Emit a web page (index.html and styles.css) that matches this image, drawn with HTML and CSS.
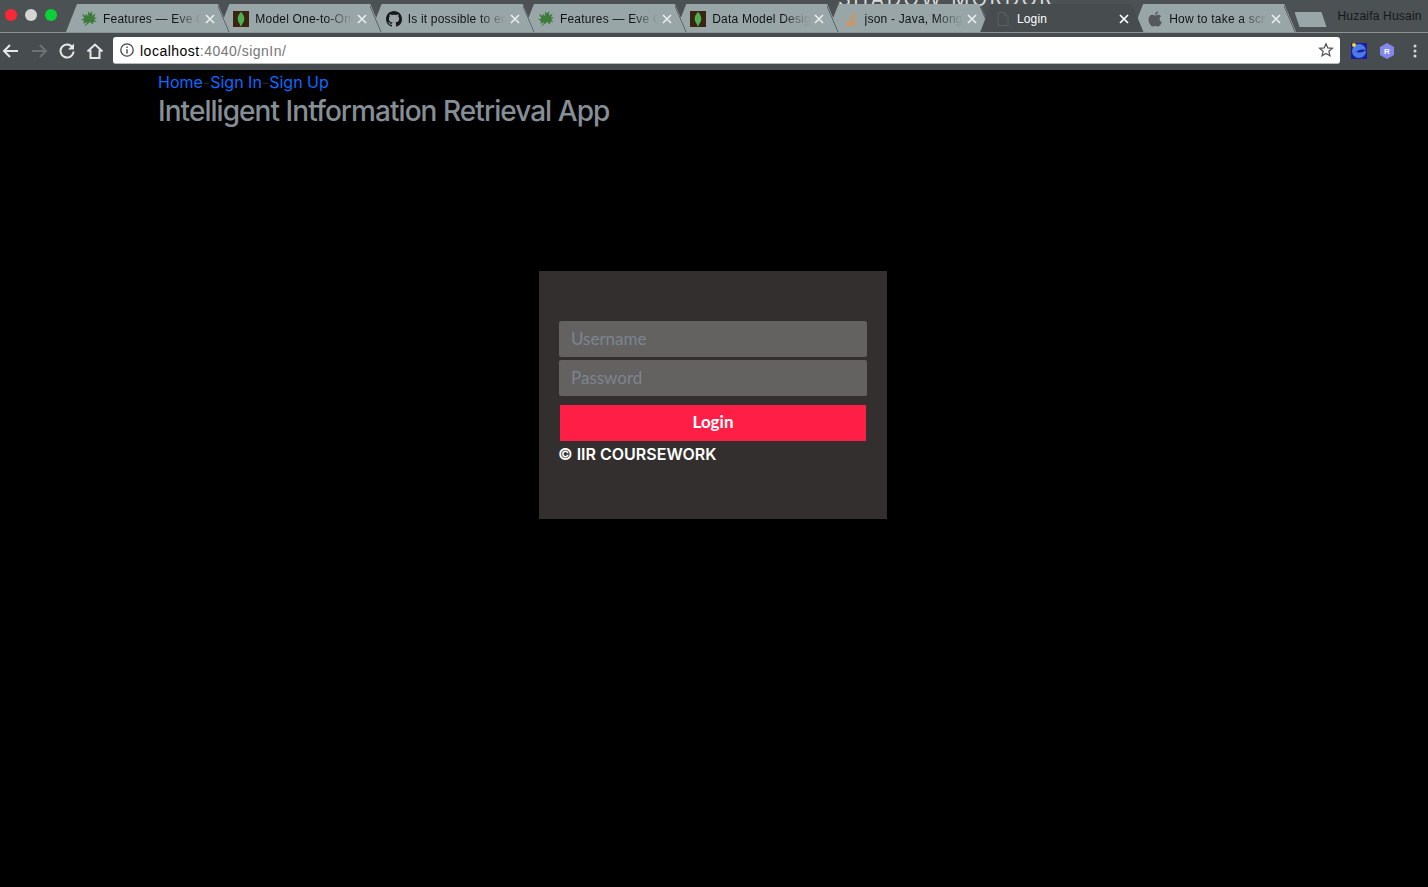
FILE: index.html
```html
<!DOCTYPE html>
<html lang="en">
<head>
    <meta charset="UTF-8">
    <title>Login</title>
    <link rel="stylesheet" href="styles.css">
</head>
<body>

<svg class="defs" width="0" height="0">
    <symbol id="leaf" viewBox="0 0 16 16">
        <path d="M3 15.500 6.600 11 2.400 12.800 3 10 0 8.400 3.400 7.400 1 3 5 4.800 5.400 2.400 7.200 5.400 7 .6 9 2.600 11.200 0 11 4.600 14.600 2.400 13 6.400 16 6.200 13.200 8.800 15.400 11 12.200 10.800 12.200 13.600 8.800 11 7.200 12.800z"/>
    </symbol>
    <symbol id="mongo" viewBox="0 0 16 16">
        <rect width="16" height="16" fill="#3a2412"/>
        <path d="M8 .8C10.800 3.800 11.600 6.600 11.200 9 10.800 11.400 9 12.800 8.400 15.200H7.600C7 12.800 5.200 11.400 4.800 9 4.400 6.600 5.200 3.800 8 .8z" fill="#4caf50"/>
    </symbol>
    <symbol id="github" viewBox="0 0 16 16">
        <path d="M8 0C3.58 0 0 3.58 0 8c0 3.54 2.29 6.53 5.47 7.59.4.07.55-.17.55-.38 0-.19-.01-.82-.01-1.49-2.01.37-2.53-.49-2.69-.94-.09-.23-.48-.94-.82-1.13-.28-.15-.68-.52-.01-.53.63-.01 1.08.58 1.23.82.72 1.21 1.87.87 2.33.66.07-.52.28-.87.51-1.07-1.78-.2-3.64-.89-3.64-3.95 0-.87.31-1.59.82-2.15-.08-.2-.36-1.02.08-2.12 0 0 .67-.21 2.2.82.64-.18 1.32-.27 2-.27.68 0 1.36.09 2 .27 1.53-1.04 2.2-.82 2.2-.82.44 1.1.16 1.92.08 2.12.51.56.82 1.27.82 2.15 0 3.07-1.87 3.75-3.65 3.95.29.25.54.73.54 1.48 0 1.07-.01 1.93-.01 2.2 0 .21.15.46.55.38A8.013 8.013 0 0016 8c0-4.42-3.58-8-8-8z"/>
    </symbol>
    <symbol id="stack" viewBox="0 0 16 16">
        <path d="M3.500 10.500v4h8v-4M5.200 12.800h4.600M5.400 10.800l4.600.6M5.800 8.800l4.400 1.400M6.600 6.800l4 2.200M8 4.800l3.200 3M9.600 3.200l2.200 3.800M11.400 1.600l1 4" fill="none" stroke="#ee8a3c" stroke-width=".9"/>
    </symbol>
    <symbol id="doc" viewBox="0 0 16 16">
        <path d="M3 1.500h6.500L13 5v9.500H3zM9.500 1.500V5H13" fill="none" stroke="#5b5f62"/>
    </symbol>
    <symbol id="apple" viewBox="0 0 16 16">
        <path d="M11 .5c.1 1.700-1.200 3.200-2.900 3.200C8 2 9.500.6 11 .5zM8.200 4.500c.8 0 1.700-.8 3-.8 1.100 0 2.300.6 3 1.600-2.400 1.400-2 4.800.6 5.800-.7 1.800-2.100 4.400-3.600 4.400-1 0-1.400-.6-2.600-.6s-1.700.6-2.600.6C4.200 15.500 1.500 12 1.500 8.500c0-3 1.900-4.800 3.900-4.800 1.200 0 2.100.8 2.800.8z"/>
    </symbol>
    <symbol id="close" viewBox="0 0 10 10">
        <path d="M1 1l8 8M9 1L1 9" fill="none" stroke="currentColor" stroke-width="1.700"/>
    </symbol>
</svg>

<header class="browser">
    <div class="tabstrip">
        <span class="backdrop-text">SHADOW MORDOR</span>
        <div class="lights">
            <span class="light light-red"></span>
            <span class="light light-grey"></span>
            <span class="light light-green"></span>
        </div>
        <div class="tabs">
            <div class="tab">
                <svg class="favicon icon-leaf"><use href="#leaf"/></svg>
                <span class="tab-title">Features — Eve Core</span>
                <svg class="tab-close"><use href="#close"/></svg>
            </div>
            <div class="tab">
                <svg class="favicon"><use href="#mongo"/></svg>
                <span class="tab-title">Model One-to-One</span>
                <svg class="tab-close"><use href="#close"/></svg>
            </div>
            <div class="tab">
                <svg class="favicon icon-github"><use href="#github"/></svg>
                <span class="tab-title">Is it possible to embed</span>
                <svg class="tab-close"><use href="#close"/></svg>
            </div>
            <div class="tab">
                <svg class="favicon icon-leaf"><use href="#leaf"/></svg>
                <span class="tab-title">Features — Eve Core</span>
                <svg class="tab-close"><use href="#close"/></svg>
            </div>
            <div class="tab">
                <svg class="favicon"><use href="#mongo"/></svg>
                <span class="tab-title">Data Model Design</span>
                <svg class="tab-close"><use href="#close"/></svg>
            </div>
            <div class="tab">
                <svg class="favicon"><use href="#stack"/></svg>
                <span class="tab-title">json - Java, MongoDB</span>
                <svg class="tab-close"><use href="#close"/></svg>
            </div>
            <div class="tab tab-active">
                <svg class="favicon"><use href="#doc"/></svg>
                <span class="tab-title">Login</span>
                <svg class="tab-close"><use href="#close"/></svg>
            </div>
            <div class="tab">
                <svg class="favicon icon-apple"><use href="#apple"/></svg>
                <span class="tab-title">How to take a screenshot</span>
                <svg class="tab-close"><use href="#close"/></svg>
            </div>
        </div>
        <span class="new-tab"></span>
        <span class="profile">Huzaifa Husain</span>
    </div>

    <div class="toolbar">
        <svg class="tool tool-first" viewBox="0 0 28 28">
            <path d="M21 14H7M13 8l-6 6 6 6" fill="none" stroke="#e6e8e8" stroke-width="2"/>
        </svg>
        <svg class="tool" viewBox="0 0 28 28">
            <path d="M7 14h14M15 8l6 6-6 6" fill="none" stroke="#6d7275" stroke-width="2"/>
        </svg>
        <svg class="tool" viewBox="0 0 28 28">
            <path d="M19.500 10.500A6.500 6.500 0 1 0 20.500 14.500" fill="none" stroke="#e6e8e8" stroke-width="2"/>
            <path d="M21 6.500v6h-6z" fill="#e6e8e8"/>
        </svg>
        <svg class="tool" viewBox="0 0 28 28">
            <path d="M6.500 14.500 14 7.500l7.500 7M9.500 13v8h9v-8" fill="none" stroke="#e6e8e8" stroke-width="2"/>
        </svg>

        <div class="omnibox">
            <svg class="omni-info" viewBox="0 0 14 14">
                <circle cx="7" cy="7" r="6.200" fill="none" stroke="#444" stroke-width="1.300"/>
                <path d="M7 6.200v4.200M7 3.500v1.400" stroke="#444" stroke-width="1.400"/>
            </svg>
            <span class="url"><span class="url-host">localhost</span>:4040/signIn/</span>
            <svg class="omni-star" viewBox="0 0 16 16">
                <path d="M8 1.800l1.800 4.100 4.500.4-3.400 3 1 4.400L8 11.400l-3.900 2.300 1-4.400-3.400-3 4.500-.4z" fill="none" stroke="#555" stroke-width="1.300"/>
            </svg>
        </div>

        <div class="extensions">
            <svg class="tool" viewBox="0 0 28 28">
                <rect x="6" y="6" width="16" height="16" fill="#1c1ca0"/>
                <circle cx="14" cy="14" r="7" fill="#4a7be8"/>
                <path d="M11 15c3-3 7-3 10-2-2 2-6 3-10 2z" fill="#1c1ca0"/>
                <circle cx="9" cy="8" r="2" fill="#f5d327"/>
            </svg>
            <svg class="tool" viewBox="0 0 28 28">
                <path d="M14 6l7 4v8l-7 4-7-4v-8z" fill="#8487ee"/>
                <text x="14" y="17" class="ext-letter">R</text>
            </svg>
            <svg class="tool" viewBox="0 0 28 28">
                <circle cx="14" cy="9" r="1.500" fill="#d6d8d8"/>
                <circle cx="14" cy="14" r="1.500" fill="#d6d8d8"/>
                <circle cx="14" cy="19" r="1.500" fill="#d6d8d8"/>
            </svg>
        </div>
    </div>
</header>

<main class="page">
    <nav class="site-nav">
        <a href="#">Home</a>-<a href="#">Sign In</a>-<a href="#">Sign Up</a>
    </nav>
    <h1 class="site-title">Intelligent Intformation Retrieval App</h1>

    <form class="login-card">
        <input class="login-input" type="text" placeholder="Username">
        <input class="login-input" type="password" placeholder="Password">
        <button class="login-btn" type="button">Login</button>
        <p class="login-foot">© IIR COURSEWORK</p>
    </form>
</main>

</body>
</html>
```

FILE: styles.css
```css
* {
    box-sizing: border-box;
}
html, body {
    margin: 0;
    height: 100%;
}
body {
    overflow: hidden;
    background-color: #000;
    font-family: "Inter", "Liberation Sans", sans-serif;
}
.defs {
    position: absolute;
}

/* browser chrome */
.browser {
    background-color: #474c4f;
}
.tabstrip {
    position: relative;
    display: flex;
    height: 33px;
    padding-top: 4px;
    overflow: hidden;
    background-color: #4c5154;
    border-bottom: 1px solid #8b9395;
}
.backdrop-text {
    position: absolute;
    top: -13px;
    left: 838px;
    color: #d8dcdc;
    font-size: 20px;
    letter-spacing: 2.4px;
    white-space: nowrap;
}
.lights {
    display: flex;
    flex: none;
    gap: 8px;
    width: 66px;
    padding: 5px 0 0 5px;
}
.light {
    width: 12px;
    height: 12px;
    border-radius: 50%;
}
.light-red {
    background-color: #fb2737;
}
.light-grey {
    background-color: #d4d4d4;
}
.light-green {
    background-color: #0ad139;
}
.tabs {
    display: flex;
    flex: none;
}
.tab {
    position: relative;
    display: flex;
    flex: none;
    align-items: center;
    width: 164px;
    height: 28px;
    margin-right: -11.7px;
    padding: 1px 15px 0 15px;
    background-color: #99a6a8;
    color: #101214;
    font-family: "Liberation Sans", sans-serif;
    font-size: 12px;
    letter-spacing: .2px;
    clip-path: polygon(0 100%, 11px 0, 152px 0, 164px 100%);
}
.tab::after {
    content: "";
    position: absolute;
    top: 0;
    right: 0;
    width: 12px;
    height: 100%;
    background: linear-gradient(to top right, transparent calc(50% - 1.5px), #4f5558 calc(50% - 1px), transparent 50%);
}
.tab:nth-child(1) { z-index: 8; }
.tab:nth-child(2) { z-index: 7; }
.tab:nth-child(3) { z-index: 6; }
.tab:nth-child(4) { z-index: 5; }
.tab:nth-child(5) { z-index: 4; }
.tab:nth-child(6) { z-index: 3; }
.tab:nth-child(8) { z-index: 2; }
.tab-active {
    z-index: 9;
    height: 29px;
    padding-bottom: 1px;
    background-color: #474c4f;
    color: #fff;
}
.tab-active::after {
    display: none;
}
.favicon {
    flex: none;
    width: 16px;
    height: 16px;
    margin-right: 6px;
}
.icon-leaf {
    fill: #3c7c3a;
}
.icon-github {
    fill: #17191b;
}
.icon-apple {
    fill: #55595b;
}
.tab-title {
    flex: 1;
    min-width: 0;
    overflow: hidden;
    white-space: nowrap;
    -webkit-mask-image: linear-gradient(to right, #000 72%, transparent 100%);
    mask-image: linear-gradient(to right, #000 72%, transparent 100%);
}
.tab-active .tab-title {
    -webkit-mask-image: none;
    mask-image: none;
}
.tab-close {
    flex: none;
    width: 10px;
    height: 10px;
    margin-left: 4px;
    color: #e8ecec;
}
.tab-active .tab-close {
    color: #fff;
}
.new-tab {
    flex: none;
    width: 32px;
    height: 15px;
    margin: 8px 0 0 10px;
    background-color: #99a6a8;
    clip-path: polygon(0 0, 27px 0, 32px 100%, 5px 100%);
}
.profile {
    flex: none;
    margin: 5px 0 0 11px;
    color: #15191b;
    font-family: "Liberation Sans", sans-serif;
    font-size: 12px;
    letter-spacing: .2px;
}

.toolbar {
    display: flex;
    align-items: center;
    height: 37px;
    padding-bottom: 1px;
}
.tool {
    flex: none;
    width: 28px;
    height: 28px;
}
.tool-first {
    margin-left: -3px;
}
.omnibox {
    display: flex;
    flex: 1;
    align-items: center;
    height: 27px;
    margin: 0 0 1px 4px;
    padding: 0 6px 0 7px;
    background-color: #fff;
    border-radius: 3px;
    border-bottom: 1px solid #b9bcbd;
}
.omni-info {
    flex: none;
    width: 14px;
    height: 14px;
    margin-right: 6px;
}
.url {
    flex: 1;
    padding-top: 1px;
    color: #757575;
    font-family: "Liberation Sans", sans-serif;
    font-size: 14px;
    letter-spacing: .5px;
}
.url-host {
    color: #000;
}
.omni-star {
    flex: none;
    width: 16px;
    height: 16px;
}
.extensions {
    display: flex;
    flex: none;
    margin: 0 -1px 0 5px;
}
.ext-letter {
    fill: #fff;
    font-family: "Liberation Sans", sans-serif;
    font-size: 8px;
    font-weight: bold;
    text-anchor: middle;
}

/* page */
.page {
    padding-left: 158px;
}
.site-nav {
    color: #212529;
    font-size: 16px;
    line-height: 24px;
}
.site-nav a {
    color: #0f68ff;
    text-decoration: none;
}
.site-title {
    margin: 0;
    color: #868e96;
    font-size: 28px;
    font-weight: 500;
    letter-spacing: -.95px;
    line-height: 34px;
}
.login-card {
    width: 348px;
    height: 248px;
    margin: 143px 0 0 381px;
    padding: 50px 20px 0;
    background-color: #332f2e;
}
.login-input {
    display: block;
    width: 100%;
    height: 36px;
    margin-bottom: 3px;
    padding: 0 12px 2px;
    border: none;
    border-radius: 2px;
    background-color: #636260;
    font-family: "Lato", sans-serif;
    font-size: 17px;
}
.login-input::placeholder {
    color: #7d8590;
    opacity: 1;
}
.login-btn {
    display: block;
    width: 306px;
    height: 36px;
    margin: 9px 1px 0;
    padding: 0 0 3px;
    border: none;
    background-color: #ff1e46;
    color: #fff;
    font-family: "Lato", sans-serif;
    font-size: 17px;
    font-weight: 700;
}
.login-foot {
    margin: 1px 0 0 -1px;
    color: #fff;
    font-size: 16px;
    font-weight: 600;
    line-height: 24px;
}
```
